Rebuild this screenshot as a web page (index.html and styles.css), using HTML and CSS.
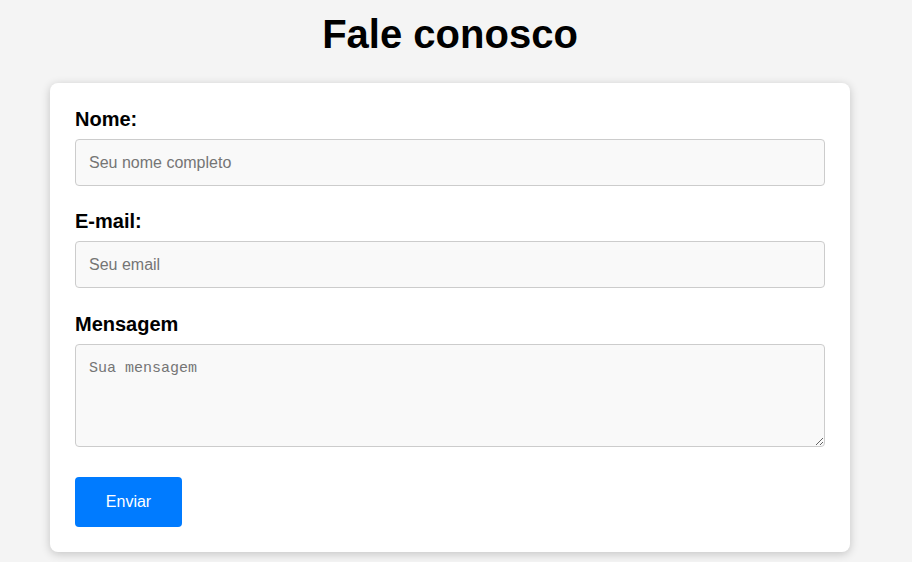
FILE: index.html
```html
<!DOCTYPE html>
<html lang="pt">
<head>
<meta charset="utf-8">
<title>Fale conosco</title>
<link rel="stylesheet" href="styles.css">
</head>
<body>
<main class="page">
  <h1 class="title">Fale conosco</h1>
  <form class="card">
    <div class="group">
      <label class="label" for="nome">Nome:</label>
      <input class="field" id="nome" type="text" placeholder="Seu nome completo">
    </div>
    <div class="group group-mid">
      <label class="label" for="email">E-mail:</label>
      <input class="field" id="email" type="email" placeholder="Seu email">
    </div>
    <div class="group group-last">
      <label class="label" for="msg">Mensagem</label>
      <textarea class="field area" id="msg" placeholder="Sua mensagem"></textarea>
    </div>
    <button class="btn" type="button">Enviar</button>
  </form>
</main>
</body>
</html>
```
FILE: styles.css
```css
html, body {
  margin: 0;
  padding: 0;
}
body {
  background: #f4f4f4;
  font-family: "Liberation Sans", Arial, sans-serif;
  color: #000;
}
.page {
  width: 800px;
  margin: 0 0 0 50px;
  padding-bottom: 10px;
}
.title {
  margin: 11px 0 26px;
  font-size: 40px;
  font-weight: bold;
  text-align: center;
  line-height: 46px;
}
.card {
  background: #fff;
  border-radius: 8px;
  box-shadow: 0 2px 10px rgba(0, 0, 0, 0.2);
  padding: 25px;
  display: flex;
  flex-direction: column;
  align-items: flex-start;
}
.group {
  display: flex;
  flex-direction: column;
  width: 100%;
  margin-bottom: 24px;
}
.group-mid {
  margin-bottom: 25px;
}
.group-last {
  margin-bottom: 30px;
}
.label {
  font-size: 20px;
  font-weight: bold;
  line-height: 23px;
  margin-bottom: 8px;
}
.field {
  box-sizing: border-box;
  width: 100%;
  height: 47px;
  border: 1px solid #ccc;
  border-radius: 4px;
  background: #f9f9f9;
  padding: 0 13px;
  font-family: "Liberation Sans", Arial, sans-serif;
  font-size: 16px;
  color: #000;
  margin: 0;
}
.field::placeholder {
  color: #757575;
}
.area {
  display: block;
  height: 103px;
  padding: 15px 13px 12px;
  font-family: "Liberation Mono", "DejaVu Sans Mono", monospace;
  font-size: 15px;
  resize: both;
}
.btn {
  box-sizing: border-box;
  width: 107px;
  height: 50px;
  border: none;
  border-radius: 4px;
  background: #007bff;
  color: #fff;
  font-family: "Liberation Sans", Arial, sans-serif;
  font-size: 16px;
  cursor: pointer;
}
```
